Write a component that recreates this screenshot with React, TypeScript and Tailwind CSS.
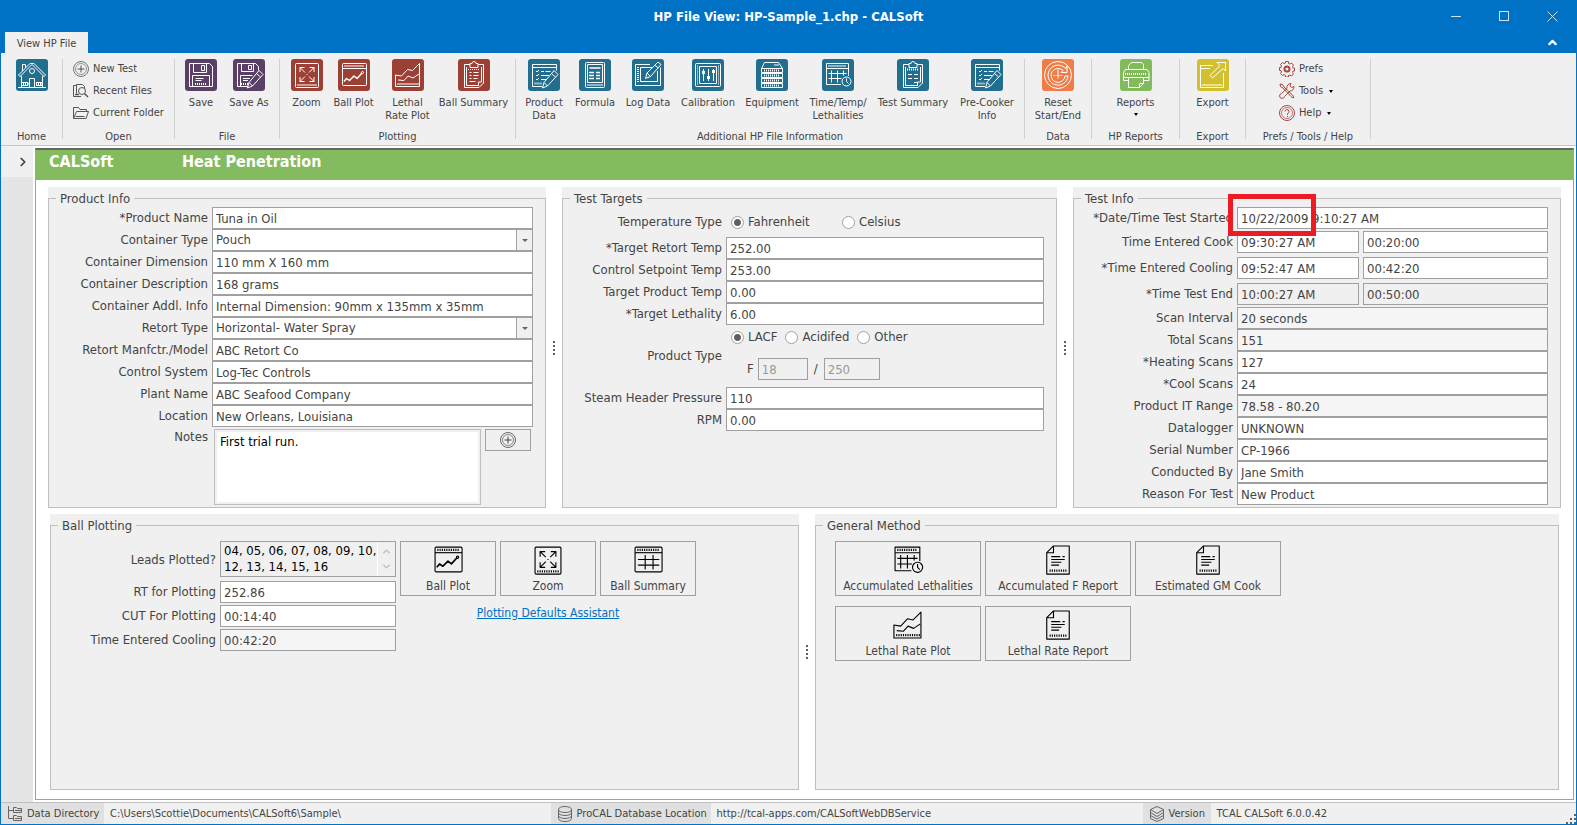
import type { ReactNode } from "react";
import { clsx } from "clsx";
import { ChevronRight, ChevronUp } from "lucide-react";

const windowFrame = (
  <>
    <rect x="4.5" y="4.5" width="24" height="22" rx="1" />
    <path d="M6.5 7h20" strokeDasharray="1 1" strokeWidth="2" />
    <path d="M4.5 9.5h24" />
  </>
);

const pencil = (
  <path d="M26 11.5l4 4-10.5 11.5-5 2 1.5-5.5zM23.5 14.5l4 3.5M16 23.5l3.5 3.5" />
);

const clipboard = (
  <>
    <path d="M12 5.5H6.5v23h14.5l4.5-4.5V5.5H20" />
    <path d="M12 4.5h2a2 2 0 0 1 4 0h2v4h-8z" />
    <path d="M8.5 8v18.5h11.5M23.5 8v15h-3v4" />
  </>
);

// 32x32 line glyphs, shared by the ribbon tiles and the form buttons
const glyphs: Record<string, ReactNode> = {
  home: (
    <>
      <path d="M2.5 16L14 4.5h4L29.5 16l-1.5 1.5-12-12-12 12zM6.5 12V5.5h3v3.5" />
      <path d="M5.5 17v11.5h21V17M13.5 28.5v-9h5v9M2 28.5h28" />
      <circle cx="16" cy="12" r="2.5" />
      <path d="M6 23.5h6v3H6M20 23.5h6v3h-6" />
      <path d="M7 25h5M20 25h6" strokeDasharray="1 1" strokeWidth="2" />
    </>
  ),
  save: (
    <>
      <path d="M4.5 4.5h20l3 3v20h-23z" />
      <path d="M8.5 4.5v9h13v-9M16.5 6.5h3v5h-3zM7.5 27.5v-11h17v11M10.5 19.5h8M10.5 21.5h6" />
      <path d="M10 25h12" strokeDasharray="1 1" strokeWidth="2" />
    </>
  ),
  saveAs: (
    <>
      <path d="M15 27.5H4.5v-23h18l3 3v4" />
      <path d="M8.5 4.5v8h12v-8M15.5 6.5h3v4h-3zM7.5 27.5v-11h12M10 19.5h7M10 21.5h5" />
      <path d="M8 25h7" strokeDasharray="1 1" strokeWidth="2" />
      {pencil}
    </>
  ),
  zoom: (
    <>
      <rect x="4.5" y="4.5" width="23" height="24" rx="1" />
      <path d="M9 13V8.5h4.5M18.5 8.5H23V13M23 18v4.5h-4.5M13.5 22.5H9V18M9 8.5l5 5M23 8.5l-5 5M23 22.5l-5-5M9 22.5l5-5M15.5 15.5h1" />
      <path d="M6.5 26h19" strokeDasharray="1 1" strokeWidth="2" />
    </>
  ),
  plot: (
    <>
      {windowFrame}
      <path d="M6 22.5l2.5-3 3 2 4.5-4.5 3 2.5 5-5.5" strokeWidth="1.5" />
      <circle cx="24.5" cy="13.5" r="1" />
    </>
  ),
  lethal: (
    <>
      <path d="M3.5 16v11.5h24v-23l-7 7-5-1-6 6.5z" />
      <path d="M6 21l6 .5 4-4.5 5 2 6-4" />
      <path d="M5.5 25h21" strokeDasharray="1 1" strokeWidth="2" />
    </>
  ),
  ballSummary: (
    <>
      {clipboard}
      <path d="M11.5 13.5h2M15.5 13.5h5M11.5 16.5h2M15.5 16.5h5M11.5 19.5h2M15.5 19.5h4M11.5 22.5h6" />
      <path d="M10 10.5h12" strokeDasharray="1 1" />
    </>
  ),
  table: (
    <>
      {windowFrame}
      <path d="M7 15.5h19M7 20.5h19M13.5 11.5v13M20.5 11.5v13" />
    </>
  ),
  tableClock: (
    <>
      <path d="M19 25.5H4.5v-21h22V17" />
      <path d="M6.5 7h18" strokeDasharray="1 1" strokeWidth="2" />
      <path d="M4.5 9.5h22M6.5 14.5h18M6.5 19.5h13M9.5 11.5v12M15.5 11.5v12M21.5 11.5v5" />
      <circle cx="24.5" cy="22.5" r="4.5" />
      <path d="M24.5 19.5v3l2 2" />
    </>
  ),
  productData: (
    <>
      <path d="M14 27.5H4.5v-22h24v6M4.5 8.5h24" />
      <path d="M8 12l1 1 2-2M8 16l1 1 2-2M8 20l1 1 2-2M13 12.5h3M17.5 12.5h5M13 16.5h8M13 20.5h5" />
      <path d="M6.5 24.5h8" strokeDasharray="1 1" strokeWidth="2" />
      {pencil}
    </>
  ),
  formula: (
    <>
      <rect x="6.5" y="3.5" width="19" height="25" rx="1" />
      <path d="M8.5 5.5h15v18h-15z" />
      <path d="M10.5 9h11M10 13.5h5M17 13.5h4M10 16.5h5M17 16.5h4M10 19.5h5M17 19.5h4" strokeWidth="1.5" />
      <path d="M8.5 26h15" strokeDasharray="1 1" strokeWidth="2" />
    </>
  ),
  logData: (
    <>
      <path d="M18 5.5H3.5v21h25v-18M20 8.5H8.5v14h17V12" />
      <path d="M6 8v16" strokeDasharray="1 1" strokeWidth="2" />
      <path d="M26 3l3 2.5-10.5 12-5 2 1.5-5.5zM23 6.5l3.5 2.5M15 14l3.5 3.5" />
    </>
  ),
  calibration: (
    <>
      <rect x="3.5" y="4.5" width="25" height="23" rx="1" />
      <path d="M7.5 7.5h17v17h-17zM11.5 10v12M16.5 10v12M21.5 10v12" />
      <path d="M10 13.5h3M15 18.5h3M20 12.5h3" strokeWidth="3" />
      <path d="M5.5 6.5v19M26.5 6.5v19" strokeDasharray="1 1" />
    </>
  ),
  equipment: (
    <>
      <path d="M8.5 3.5h14l4 6h-21zM5.5 9.5h21v4h-21zM5.5 14.5h21v4h-21zM5.5 19.5h21v4h-21zM5.5 24.5h21v4h-21z" />
      <path d="M8 11.5h16M8 16.5h16M8 21.5h16M8 26.5h16" strokeDasharray="1 1" strokeWidth="2" />
      <path d="M18 6h5" />
    </>
  ),
  testSummary: (
    <>
      {clipboard}
      <path d="M11 15.5h4M17 15.5h4M11 19.5h4M17 19.5h4M17 23.5h3" />
      <path d="M10 10.5h12" strokeDasharray="1 1" strokeWidth="2" />
    </>
  ),
  reset: (
    <>
      <circle cx="16" cy="16" r="13.5" />
      <path d="M23.5 9.5A10 10 0 1 0 26 17h-3a7 7 0 1 1-2-5.5l-2 2h6V7z" />
      <path d="M16 10.5v9" />
      <path d="M11.5 16.5h10" strokeDasharray="1 1" />
    </>
  ),
  printer: (
    <>
      <path d="M8.5 10V6.5l3-3h10l2 2V10M5 10.5h22l2 3v8h-5.5M8.5 21.5H3.5v-8l2-3M3 18.5h26" />
      <path d="M8.5 18.5v10h11l4-4v-6M19.5 28.5v-4h4" />
      <path d="M5 15h22" strokeDasharray="1 1" strokeWidth="2" />
    </>
  ),
  exportArrow: (
    <>
      <path d="M16 6.5H3.5v22h23V14M3.5 9.5H13" />
      <path d="M20 3.5h8.5V12l-2.5-2.5L15.5 19 13 16.5 23 6.5z" />
      <path d="M5.5 26h19" strokeDasharray="1 1" strokeWidth="2" />
    </>
  ),
  doc: (
    <>
      <path d="M12 3.5h14v25H6v-19z" />
      <path d="M12 3.5V9.5H6M10 13h8M20 13h2M10 15.5h12M10 18h9M10 20.5h7" />
      <path d="M8.5 25.5h15" strokeDasharray="1 1" strokeWidth="2" />
    </>
  ),
};

const smallGlyphs: Record<string, ReactNode> = {
  plus: (
    <>
      <circle cx="8" cy="8" r="7.5" strokeWidth=".8" />
      <circle cx="8" cy="8" r="5.5" strokeWidth=".6" />
      <path d="M8 4.5v7M4.5 8h7" />
    </>
  ),
  recent: (
    <>
      <path d="M8 13.5H.5v-11h3v-1h6l2 2v2M3.5 2.5v8" />
      <circle cx="9" cy="8" r="3.5" />
      <path d="M11.5 10.5l3.5 3.5M2 11.5h4" strokeWidth="1.5" />
    </>
  ),
  folder: (
    <path d="M.5 13.5v-11h5l1.5 2h6.5v2M.5 13.5l3-7h12l-2.5 7zM2.5 11.5h9" />
  ),
  gear: (
    <>
      <circle cx="8" cy="8" r="2.5" strokeWidth="2" />
      <path d="M6.5.5h3v2l1.5.5 1.5-1 2 2-1 1.5.5 1.5h1.5v3H14l-.5 1.5 1 1.5-2 2-1.5-1-1.5.5v1.5h-3v-1.5L5 13.5l-1.5 1-2-2 1-1.5L2 9.5H.5v-3H2L2.5 5l-1-1.5 2-2L5 2.5 6.5 2z" />
    </>
  ),
  tools: (
    <>
      <path d="M1 1l2.5.5L5 4l8.5 8 1.5 2-1 1-2-1.5L4 5 1.5 3.5z" />
      <path d="M15 3.5l-2.5 1-1.5-1.5 1-2.5a4 4 0 0 0-4 5L2.5 10.5a2.5 2.5 0 1 0 3 3L11 8a4 4 0 0 0 4-4.5z" />
    </>
  ),
  help: (
    <>
      <circle cx="8" cy="8" r="7.5" />
      <circle cx="8" cy="8" r="5.5" strokeWidth=".7" />
      <path d="M6 6.5a2 2 0 1 1 2.5 2V10M8.5 11v1" />
    </>
  ),
  directory: (
    <path d="M1.5 0v12.5H6M1.5 4.5H6M6.5 1.5h3l1 1h4v4h-8zM6.5 9.5h3l1 1h4v4h-8zM8 4.5h6M8 12.5h6" />
  ),
  database: (
    <path d="M1.5 3.5c0-4 13-4 13 0s-13 4-13 0v9c0 4 13 4 13 0v-9M1.5 6.5c0 4 13 4 13 0M1.5 9.5c0 4 13 4 13 0" />
  ),
  layers: (
    <path d="M8 .5l6.5 3L8 7.5l-6.5-4zM1.5 3.5v9L8 15.5l6.5-3v-9M1.5 6.5L8 10.5l6.5-4M1.5 9.5L8 13l6.5-3.5" />
  ),
};

function Glyph({ name, className }: { name: string; className?: string }) {
  return (
    <svg viewBox="0 0 32 32" fill="none" stroke="currentColor" strokeLinejoin="round" className={className} aria-hidden="true">
      {glyphs[name]}
    </svg>
  );
}

function SmallGlyph({ name, className }: { name: string; className?: string }) {
  return (
    <svg viewBox="0 0 16 16" fill="none" stroke="currentColor" strokeLinejoin="round" className={clsx("h-4 w-4 shrink-0", className)} aria-hidden="true">
      {smallGlyphs[name]}
    </svg>
  );
}

function Caret({ className }: { className?: string }) {
  return <span className={clsx("border-x-2 border-t-3 border-x-transparent", className)} />;
}

type Tile = { icon: string; label: string; width: string; caret?: boolean };

const plotting: Tile[] = [
  { icon: "zoom", label: "Zoom", width: "w-11" },
  { icon: "plot", label: "Ball Plot", width: "w-[50px]" },
  { icon: "lethal", label: "Lethal\nRate Plot", width: "w-[58px]" },
  { icon: "ballSummary", label: "Ball Summary", width: "w-[74px]" },
];

const additional: Tile[] = [
  { icon: "productData", label: "Product\nData", width: "w-[50px]" },
  { icon: "formula", label: "Formula", width: "w-[52px]" },
  { icon: "logData", label: "Log Data", width: "w-[54px]" },
  { icon: "calibration", label: "Calibration", width: "w-[66px]" },
  { icon: "equipment", label: "Equipment", width: "w-[62px]" },
  { icon: "tableClock", label: "Time/Temp/\nLethalities", width: "w-[70px]" },
  { icon: "testSummary", label: "Test Summary", width: "w-20" },
  { icon: "productData", label: "Pre-Cooker\nInfo", width: "w-[68px]" },
];

function RibbonTile({ icon, label, width, caret, color }: Tile & { color: string }) {
  return (
    <button className={clsx("flex flex-col items-center", width)} aria-label={label || "Home"}>
      <span className={clsx("rounded-[3px] text-white", color)}>
        <Glyph name={icon} className="h-8 w-8" />
      </span>
      <span className="mt-[5px] whitespace-pre text-center leading-[13px]">{label}</span>
      {caret && <Caret className="mt-1 border-t-black" />}
    </button>
  );
}

function RibbonGroup({ title, width, children }: { title: string; width: string; children: ReactNode }) {
  return (
    <div className={clsx("flex shrink-0", width)}>
      <div className="flex min-w-0 flex-1 flex-col pt-1.5">
        <div className="flex flex-1 justify-center">{children}</div>
        <div className="h-4 whitespace-nowrap text-center leading-4">{title}</div>
      </div>
      <div className="mt-1.5 h-20 w-px bg-[#d0d0d0]" />
    </div>
  );
}

function SmallItem({ icon, label, caret, color }: { icon: string; label: string; caret?: boolean; color: string }) {
  return (
    <button className="flex h-[22px] items-center gap-1 whitespace-nowrap">
      <SmallGlyph name={icon} className={color} />
      {label}
      {caret && <Caret className="ml-0.5 border-t-black" />}
    </button>
  );
}

function GroupBox({ title, className, children }: { title: string; className?: string; children: ReactNode }) {
  return (
    <div className={clsx("flex min-w-0 basis-0 bg-[#f0f0f0] pt-[3px]", className)}>
      <fieldset className="min-w-0 flex-1 border border-[#bfbfbf]">
        <legend className="ml-[7px] px-1 leading-[17px]">{title}</legend>
        {children}
      </fieldset>
    </div>
  );
}

function Splitter() {
  return (
    <div className="flex w-4 shrink-0 flex-col items-center justify-center gap-0.5">
      {[0, 1, 2, 3].map((i) => (
        <span key={i} className="h-0.5 w-0.5 bg-[#606060]" />
      ))}
    </div>
  );
}

const box = "h-[22px] w-full min-w-0 border border-[#a0a0a0] px-[3px] outline-none";

function Row({ label, id, className, children }: { label: string; id?: string; className?: string; children: ReactNode }) {
  return (
    <div className={clsx("grid grid-cols-[159px_1fr] items-center gap-1 pr-3", className)}>
      <label htmlFor={id} className="whitespace-nowrap text-right">{label}</label>
      {children}
    </div>
  );
}

function TextRow({ label, value, bg = "bg-white", className }: { label: string; value: string; bg?: string; className?: string }) {
  const id = label.replace(/\W/g, "-").toLowerCase();
  return (
    <Row label={label} id={id} className={className}>
      <input id={id} defaultValue={value} readOnly={bg !== "bg-white"} className={clsx(box, bg)} />
    </Row>
  );
}

function SelectRow({ label, value }: { label: string; value: string }) {
  const id = label.replace(/\W/g, "-").toLowerCase();
  return (
    <Row label={label} id={id}>
      <div className="relative">
        <select id={id} className={clsx(box, "block appearance-none bg-white")}>
          <option>{value}</option>
        </select>
        <span className="pointer-events-none absolute inset-y-0 right-0 flex w-[17px] items-center justify-center border border-[#a0a0a0] bg-[#f0f0f0]">
          <Caret className="border-x-3 border-t-[#666]" />
        </span>
      </div>
    </Row>
  );
}

function TimeRow({ label, time, elapsed, bg = "bg-white", className }: { label: string; time: string; elapsed: string; bg?: string; className?: string }) {
  const id = "time-" + time.replace(/\W/g, "-");
  return (
    <Row label={label} id={id} className={className}>
      <div className="grid grid-cols-[122px_1fr] gap-1">
        <input id={id} defaultValue={time} className={clsx(box, bg)} />
        <input aria-label={`${label} elapsed`} defaultValue={elapsed} className={clsx(box, bg)} />
      </div>
    </Row>
  );
}

function Radio({ name, label, checked }: { name: string; label: string; checked?: boolean }) {
  return (
    <label className="flex items-center gap-1">
      <input
        type="radio"
        name={name}
        defaultChecked={checked}
        className="h-[13px] w-[13px] appearance-none rounded-full border border-[#a0a0a0] bg-white checked:bg-[radial-gradient(circle,#606060_3px,#fff_4px)]"
      />
      {label}
    </label>
  );
}

function BigButton({ icon, label, width }: { icon: string; label: string; width: string }) {
  return (
    <button className={clsx("flex h-[55px] flex-col items-center justify-end whitespace-nowrap border border-[#a0a0a0] text-[12px]", width)}>
      <Glyph name={icon} className="h-9 w-9 text-black" />
      <span className="leading-[17px]">{label}</span>
    </button>
  );
}

function TestInfo() {
  return (
    <GroupBox title="Test Info" className="grow-[488]">
      <div className="relative">
        <TextRow label="*Date/Time Test Started" value="10/22/2009 9:10:27 AM" />
        {/* callout around the date part */}
        <div className="pointer-events-none absolute -top-[13px] left-[154px] h-[42px] w-[88px] border-5 border-[#ed1c24]" />
      </div>
      <TimeRow label="Time Entered Cook" time="09:30:27 AM" elapsed="00:20:00" className="mt-0.5" />
      <TimeRow label="*Time Entered Cooling" time="09:52:47 AM" elapsed="00:42:20" className="mt-1" />
      <TimeRow label="*Time Test End" time="10:00:27 AM" elapsed="00:50:00" bg="bg-[#f0f0f0]" className="mt-1 mb-0.5" />
      <TextRow label="Scan Interval" value="20 seconds" bg="bg-[#f5f5f5]" />
      <TextRow label="Total Scans" value="151" bg="bg-[#f5f5f5]" />
      <TextRow label="*Heating Scans" value="127" />
      <TextRow label="*Cool Scans" value="24" />
      <TextRow label="Product IT Range" value="78.58 - 80.20" bg="bg-[#f5f5f5]" />
      <TextRow label="Datalogger" value="UNKNOWN" />
      <TextRow label="Serial Number" value="CP-1966" />
      <TextRow label="Conducted By" value="Jane Smith" />
      <TextRow label="Reason For Test" value="New Product" />
    </GroupBox>
  );
}

function TestTargets() {
  return (
    <GroupBox title="Test Targets" className="grow-[495]">
      <Row label="Temperature Type" className="h-[30px]">
        <div className="grid grid-cols-[111px_1fr] pl-[5px]">
          <Radio name="temp" label="Fahrenheit" checked />
          <Radio name="temp" label="Celsius" />
        </div>
      </Row>
      <TextRow label="*Target Retort Temp" value="252.00" />
      <TextRow label="Control Setpoint Temp" value="253.00" />
      <TextRow label="Target Product Temp" value="0.00" />
      <TextRow label="*Target Lethality" value="6.00" />
      <Row label="Product Type" className="h-[62px]">
        <div className="self-start pl-[5px]">
          <div className="flex h-6 items-center gap-2">
            <Radio name="product" label="LACF" checked />
            <Radio name="product" label="Acidifed" />
            <Radio name="product" label="Other" />
          </div>
          <div className="mt-[9px] flex items-center pl-4">
            <label htmlFor="f-ref">F</label>
            <input id="f-ref" disabled defaultValue="18" className="ml-1 h-[22px] w-[50px] border border-[#a0a0a0] px-[3px] text-[#999]" />
            <label htmlFor="f-temp" className="w-4 text-center">/</label>
            <input id="f-temp" disabled defaultValue="250" className="h-[22px] w-14 border border-[#a0a0a0] px-[3px] text-[#999]" />
          </div>
        </div>
      </Row>
      <TextRow label="Steam Header Pressure" value="110" />
      <TextRow label="RPM" value="0.00" />
    </GroupBox>
  );
}

function ProductInfo() {
  return (
    <GroupBox title="Product Info" className="grow-[498]">
      <TextRow label="*Product Name" value="Tuna in Oil" />
      <SelectRow label="Container Type" value="Pouch" />
      <TextRow label="Container Dimension" value="110 mm X 160 mm" />
      <TextRow label="Container Description" value="168 grams" />
      <TextRow label="Container Addl. Info" value="Internal Dimension: 90mm x 135mm x 35mm" />
      <SelectRow label="Retort Type" value="Horizontal- Water Spray" />
      <TextRow label="Retort Manfctr./Model" value="ABC Retort Co" />
      <TextRow label="Control System" value="Log-Tec Controls" />
      <TextRow label="Plant Name" value="ABC Seafood Company" />
      <TextRow label="Location" value="New Orleans, Louisiana" />
      <div className="grid grid-cols-[159px_1fr] gap-1 pt-0.5 pb-0.5 pr-3">
        <label htmlFor="notes" className="text-right leading-4">Notes</label>
        <div className="flex items-start gap-1 px-0.5">
          <div className="flex h-[76px] flex-1 border border-[#bfbfbf] p-0.5">
            <textarea id="notes" defaultValue="First trial run." className="min-w-0 flex-1 resize-none bg-white px-[3px] text-black outline-none" />
          </div>
          <button aria-label="Add note" className="flex h-[22px] w-[46px] items-center justify-center border border-[#a0a0a0]">
            <SmallGlyph name="plus" />
          </button>
        </div>
      </div>
    </GroupBox>
  );
}

function BallPlotting() {
  return (
    <GroupBox title="Ball Plotting" className="grow-[749]">
      <div className="flex items-start gap-1 pt-[7px]">
        <div className="grid shrink-0 grid-cols-[165px_176px] items-center gap-x-1 gap-y-0.5">
          <label htmlFor="leads" className="text-right">Leads Plotted?</label>
          <div className="mb-0.5 flex h-9 border border-[#a0a0a0]">
            <textarea
              id="leads"
              readOnly
              defaultValue={"04, 05, 06, 07, 08, 09, 10,\n12, 13, 14, 15, 16"}
              className="min-w-0 flex-1 resize-none overflow-hidden whitespace-pre pt-px pl-[3px] leading-4 text-black outline-none"
            />
            <div className="flex w-[18px] flex-col items-center justify-between border-l border-white py-1 text-[#bbb]">
              <ChevronUp size={11} strokeWidth={3} />
              <ChevronUp size={11} strokeWidth={3} className="rotate-180" />
            </div>
          </div>
          <label htmlFor="rt" className="text-right">RT for Plotting</label>
          <input id="rt" defaultValue="252.86" className={clsx(box, "bg-white")} />
          <label htmlFor="cut" className="text-right">CUT For Plotting</label>
          <input id="cut" defaultValue="00:14:40" className={clsx(box, "bg-white")} />
          <label htmlFor="cooling" className="text-right">Time Entered Cooling</label>
          <input id="cooling" readOnly defaultValue="00:42:20" className={clsx(box, "bg-[#f5f5f5]")} />
        </div>
        <div>
          <div className="flex gap-1">
            <BigButton icon="plot" label="Ball Plot" width="w-24" />
            <BigButton icon="zoom" label="Zoom" width="w-24" />
            <BigButton icon="table" label="Ball Summary" width="w-24" />
          </div>
          <div className="mt-2 text-center text-[12px]">
            <a href="#assistant" className="text-[#0072c6] underline">Plotting Defaults Assistant</a>
          </div>
        </div>
      </div>
    </GroupBox>
  );
}

function GeneralMethod() {
  return (
    <GroupBox title="General Method" className="grow-[744]">
      <div className="flex flex-col gap-2.5 pt-[7px] pl-[19px]">
        <div className="flex gap-1">
          <BigButton icon="tableClock" label="Accumulated Lethalities" width="w-[146px]" />
          <BigButton icon="doc" label="Accumulated F Report" width="w-[146px]" />
          <BigButton icon="doc" label="Estimated GM Cook" width="w-[146px]" />
        </div>
        <div className="flex gap-1">
          <BigButton icon="lethal" label="Lethal Rate Plot" width="w-[146px]" />
          <BigButton icon="doc" label="Lethal Rate Report" width="w-[146px]" />
        </div>
      </div>
    </GroupBox>
  );
}

function StatusLabel({ icon, width, children }: { icon: string; width: string; children: ReactNode }) {
  return (
    <div className={clsx("flex h-full shrink-0 items-center gap-1 whitespace-nowrap bg-[#e0e0e0] pl-1.5", width)}>
      <SmallGlyph name={icon} className="text-[#666]" />
      {children}
    </div>
  );
}

export default function App() {
  return (
    <div className="flex min-h-screen flex-col border-x border-b border-[#0072c6] bg-[#f0f0f0] font-['DejaVu_Sans_Condensed','Noto_Sans',sans-serif] text-[13px] text-[#444]">
      <header className="bg-[#0072c6]">
        <div className="grid h-8 grid-cols-[1fr_auto_1fr] items-center text-white">
          <h1 className="col-start-2 pt-0.5 font-bold">HP File View: HP-Sample_1.chp - CALSoft</h1>
          <div className="flex items-center justify-end">
            <button aria-label="Minimize" className="flex h-8 w-12 items-center justify-center">
              <span className="h-px w-2.5 bg-[#cce3f4]" />
            </button>
            <button aria-label="Maximize" className="flex h-8 w-12 items-center justify-center">
              <span className="h-2.5 w-2.5 border border-[#cce3f4]" />
            </button>
            <button aria-label="Close" className="flex h-8 w-12 items-center justify-center">
              <svg viewBox="0 0 11 11" className="h-[11px] w-[11px]" stroke="#cce3f4" aria-hidden="true">
                <path d="M.5.5l10 10M10.5.5l-10 10" />
              </svg>
            </button>
          </div>
        </div>
        <div className="flex h-[21px] items-center justify-between">
          <button className="ml-1 h-full w-[83px] bg-[#f0f0f0] pt-1 text-[11px]">View HP File</button>
          <button aria-label="Collapse ribbon" className="flex w-12 justify-center text-white"><ChevronUp size={13} strokeWidth={4} /></button>
        </div>
      </header>

      <nav className="flex h-[93px] border-b border-[#c6c6c6] text-[11px]">
        <RibbonGroup title="Home" width="w-[62px]">
          <RibbonTile icon="home" label="" width="w-12" color="bg-[#216e8e]" />
        </RibbonGroup>
        <RibbonGroup title="Open" width="w-28">
          <div className="-mt-px flex flex-col">
            <SmallItem icon="plus" label="New Test" color="text-[#555]" />
            <SmallItem icon="recent" label="Recent Files" color="text-[#555]" />
            <SmallItem icon="folder" label="Current Folder" color="text-[#555]" />
          </div>
        </RibbonGroup>
        <RibbonGroup title="File" width="w-[105px]">
          <div className="flex pr-1">
            <RibbonTile icon="save" label="Save" width="w-12" color="bg-[#5a3f66]" />
            <RibbonTile icon="saveAs" label="Save As" width="w-12" color="bg-[#5a3f66]" />
          </div>
        </RibbonGroup>
        <RibbonGroup title="Plotting" width="w-[236px]">
          {plotting.map((t) => <RibbonTile key={t.label} {...t} color="bg-[#9c4035]" />)}
        </RibbonGroup>
        <RibbonGroup title="Additional HP File Information" width="w-[509px]">
          {additional.map((t) => <RibbonTile key={t.label} {...t} color="bg-[#216e8e]" />)}
        </RibbonGroup>
        <RibbonGroup title="Data" width="w-[67px]">
          <RibbonTile icon="reset" label={"Reset\nStart/End"} width="w-14" color="bg-[#ee7d48]" />
        </RibbonGroup>
        <RibbonGroup title="HP Reports" width="w-[88px]">
          <RibbonTile icon="printer" label="Reports" width="w-14" color="bg-[#82bb5c]" caret />
        </RibbonGroup>
        <RibbonGroup title="Export" width="w-[66px]">
          <RibbonTile icon="exportArrow" label="Export" width="w-14" color="bg-[#d3c030]" />
        </RibbonGroup>
        <RibbonGroup title="Prefs / Tools / Help" width="w-[125px]">
          <div className="-mt-px flex flex-col pr-1">
            <SmallItem icon="gear" label="Prefs" color="text-[#a8483f]" />
            <SmallItem icon="tools" label="Tools" color="text-[#a8483f]" caret />
            <SmallItem icon="help" label="Help" color="text-[#a8483f]" caret />
          </div>
        </RibbonGroup>
      </nav>

      <div className="flex flex-1 bg-white">
        <aside className="w-8 shrink-0 bg-[#e5e5e5]">
          <button aria-label="Expand panel" className="flex h-[31px] w-full items-center justify-center bg-[#f0f0f0] pl-3">
            <ChevronRight size={14} strokeWidth={3} />
          </button>
        </aside>
        <main className="m-0.5 flex min-w-0 flex-1 flex-col border border-t-2 border-[#a0a0a0] border-t-[#666]">
          <div className="flex h-[30px] bg-[#84bb5e] pl-[13px] text-[16px] leading-6 font-bold text-white">
            <span className="w-[133px]">CALSoft</span>
            <h2>Heat Penetration</h2>
          </div>
          <div className="flex px-3 pt-[7px]">
            <ProductInfo />
            <Splitter />
            <TestTargets />
            <Splitter />
            <TestInfo />
          </div>
          <div className="flex flex-1 px-3.5 pt-1.5 pb-[9px]">
            <BallPlotting />
            <Splitter />
            <GeneralMethod />
          </div>
        </main>
      </div>

      <footer className="flex h-[22px] items-center border-t border-[#bfbfbf] text-[11px] leading-5">
        <StatusLabel icon="directory" width="w-[103px]">Data Directory</StatusLabel>
        <div className="min-w-0 grow-[448] basis-0 truncate px-1.5">C:\Users\Scottie\Documents\CALSoft6\Sample\</div>
        <StatusLabel icon="database" width="w-40">ProCAL Database Location</StatusLabel>
        <div className="min-w-0 grow-[433] basis-0 truncate px-1.5">http://tcal-apps.com/CALSoftWebDBService</div>
        <StatusLabel icon="layers" width="w-[68px]">Version</StatusLabel>
        <div className="min-w-0 grow-[354] basis-0 px-1.5">TCAL CALSoft 6.0.0.42</div>
        <svg viewBox="0 0 10 10" className="h-2.5 w-2.5 self-end" fill="#606060" aria-hidden="true">
          <path d="M8 0h2v2H8zM4 4h2v2H4zM8 4h2v2H8zM0 8h2v2H0zM4 8h2v2H4zM8 8h2v2H8z" />
        </svg>
      </footer>
    </div>
  );
}
